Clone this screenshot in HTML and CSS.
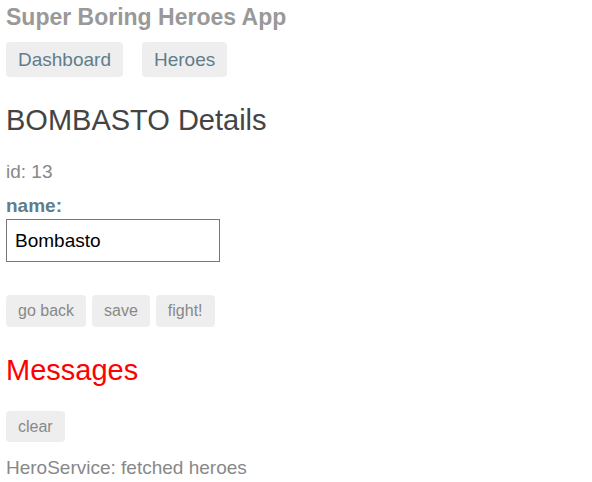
FILE: index.html
```html
<!DOCTYPE html>
<html>
<head>
<meta charset="utf-8">
<link rel="stylesheet" href="styles.css">
</head>
<body>
<h1 class="title">Super Boring Heroes App</h1>
<nav class="nav">
  <a class="nav-link">Dashboard</a>
  <a class="nav-link">Heroes</a>
</nav>
<section class="detail">
  <h2 class="detail-title">BOMBASTO Details</h2>
  <div class="hero-id">id: 13</div>
  <div class="field">
    <label class="field-label">name:</label>
    <input class="field-input" type="text" value="Bombasto">
  </div>
  <div class="actions">
    <button class="btn">go back</button>
    <button class="btn">save</button>
    <button class="btn">fight!</button>
  </div>
</section>
<section class="messages">
  <h2 class="messages-title">Messages</h2>
  <button class="btn btn-clear">clear</button>
  <div class="message">HeroService: fetched heroes</div>
</section>
</body>
</html>
```
FILE: styles.css
```css
body {
  margin: 5px 6px;
  font-family: "Liberation Sans", Arial, sans-serif;
  color: #888;
}
.title {
  margin: 0;
  font-size: 23px;
  font-weight: bold;
  color: #999;
  line-height: 24px;
}
.nav {
  display: flex;
  gap: 19px;
  margin-top: 13px;
}
.nav-link {
  background: #eee;
  color: #607d8b;
  font-size: 19px;
  line-height: 22px;
  padding: 7px 12px 6px 12px;
  border-radius: 4px;
}
.detail-title {
  margin: 26px 0 0;
  font-size: 29px;
  font-weight: normal;
  color: #444;
  line-height: 34px;
}
.hero-id {
  margin-top: 24px;
  font-size: 19px;
  line-height: 22px;
}
.field {
  margin-top: 12px;
  display: flex;
  flex-direction: column;
  align-items: flex-start;
}
.field-label {
  font-size: 19px;
  font-weight: bold;
  color: #607d8b;
  line-height: 22px;
}
.field-input {
  margin-top: 2px;
  width: 214px;
  height: 43px;
  box-sizing: border-box;
  border: 1px solid #777;
  padding: 0 8px;
  font-family: "Liberation Sans", Arial, sans-serif;
  font-size: 19px;
  color: #000;
}
.actions {
  margin-top: 33px;
  display: flex;
  gap: 6px;
}
.btn {
  background: #eee;
  border: none;
  border-radius: 4px;
  color: #888;
  font-family: "Liberation Sans", Arial, sans-serif;
  font-size: 16px;
  line-height: 18px;
  padding: 7px 12px;
}
.btn-clear {
  padding: 7px 12px 6px;
}
.messages-title {
  margin: 26px 0 24px;
  font-size: 29px;
  font-weight: normal;
  color: #f00;
  line-height: 34px;
}
.message {
  margin-top: 15px;
  font-size: 19px;
  line-height: 22px;
}
```
